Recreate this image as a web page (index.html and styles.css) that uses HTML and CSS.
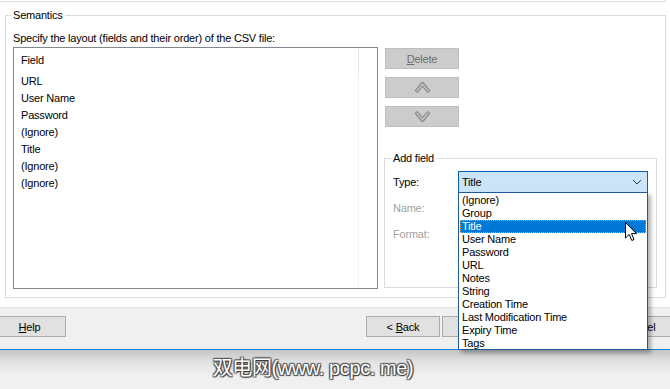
FILE: index.html
```html
<!DOCTYPE html>
<html lang="en">
<head>
    <meta charset="UTF-8">
    <title>CSV Import - Semantics</title>
    <link rel="stylesheet" href="styles.css">
</head>
<body>
    <div class="window">
        <div class="prev-edge"></div>

        <fieldset class="group semantics">
            <legend>Semantics</legend>
            <p class="hint">Specify the layout (fields and their order) of the CSV file:</p>
            <div class="semantics-body">
                <div class="listview">
                    <div class="lv-col">
                        <div class="lv-header">Field</div>
                        <ul class="lv-items">
                            <li>URL</li>
                            <li>User Name</li>
                            <li>Password</li>
                            <li>(Ignore)</li>
                            <li>Title</li>
                            <li>(Ignore)</li>
                            <li>(Ignore)</li>
                        </ul>
                    </div>
                </div>

                <div class="side">
                    <div class="side-buttons">
                        <button class="btn btn-disabled"><span><u>D</u>elete</span></button>
                        <button class="btn btn-disabled" aria-label="Move up">
                            <svg width="17" height="11" viewBox="0 0 17 11">
                                <path d="M2 10 L8.5 2 L15 10" fill="none" stroke="#8e8e8e" stroke-width="4" stroke-linejoin="miter"/>
                                <path d="M2.6 9.4 L8.5 2.2 L14.4 9.4" fill="none" stroke="#c4c4c4" stroke-width="1.4"/>
                            </svg>
                        </button>
                        <button class="btn btn-disabled" aria-label="Move down">
                            <svg width="17" height="11" viewBox="0 0 17 11">
                                <path d="M2 1 L8.5 9 L15 1" fill="none" stroke="#8e8e8e" stroke-width="4" stroke-linejoin="miter"/>
                                <path d="M2.6 1.6 L8.5 8.8 L14.4 1.6" fill="none" stroke="#c4c4c4" stroke-width="1.4"/>
                            </svg>
                        </button>
                    </div>

                    <fieldset class="group add-field">
                        <legend>Add field</legend>
                        <div class="form-row">
                            <span class="form-label">Type:</span>
                            <div class="combo">
                                <span>Title</span>
                                <svg width="10" height="6" viewBox="0 0 10 6">
                                    <path d="M1 1 L5 5 L9 1" fill="none" stroke="#333" stroke-width="1"/>
                                </svg>
                            </div>
                        </div>
                        <div class="form-row disabled">
                            <span class="form-label">Name:</span>
                        </div>
                        <div class="form-row disabled">
                            <span class="form-label">Format:</span>
                        </div>
                    </fieldset>
                </div>
            </div>
        </fieldset>

        <div class="spacer"></div>

        <div class="button-bar">
            <button class="btn btn-help"><span><u>H</u>elp</span></button>
            <div class="nav-buttons">
                <button class="btn"><span>&lt; <u>B</u>ack</span></button>
                <button class="btn"><span><u>N</u>ext &gt;</span></button>
                <button class="btn btn-cancel"><span>Cancel</span></button>
            </div>
        </div>

        <div class="desktop">
            <span class="watermark">双电网(www. pcpc. me)</span>
        </div>

        <ul class="dropdown">
            <li>(Ignore)</li>
            <li>Group</li>
            <li class="selected">Title</li>
            <li>User Name</li>
            <li>Password</li>
            <li>URL</li>
            <li>Notes</li>
            <li>String</li>
            <li>Creation Time</li>
            <li>Last Modification Time</li>
            <li>Expiry Time</li>
            <li>Tags</li>
        </ul>

        <svg class="cursor" width="13" height="20" viewBox="0 0 13 20">
            <path d="M0.5 0.5 L0.5 16 L4.2 12.4 L6.8 18.5 L9 17.5 L6.5 11.6 L11.5 11.6 Z" fill="#fff" stroke="#000" stroke-width="1" stroke-linejoin="round"/>
        </svg>
    </div>
</body>
</html>
```

FILE: styles.css
```css
* {
    margin: 0;
    padding: 0;
    box-sizing: border-box;
}

body {
    background-color: #fff;
    font-family: 'Liberation Sans', Arial, sans-serif;
    font-size: 11px;
    letter-spacing: -0.2px;
    color: #000;
}

.window {
    position: relative;
    width: 670px;
    height: 389px;
    overflow: hidden;
    display: flex;
    flex-direction: column;
    background-color: #fff;
}

.prev-edge {
    width: 666px;
    height: 2px;
    border-bottom: 1px solid #dcdcdc;
    border-right: 1px solid #dcdcdc;
}

/* group boxes */
.group {
    border: 1px solid #dcdcdc;
}

.group legend {
    line-height: 13px;
    padding: 0 2px;
    margin-left: -2px;
}

.semantics {
    margin: 7px 5px 0 5px;
    padding: 10px 8px 8px 7px;
}

.hint {
    line-height: 13px;
    margin-bottom: 2px;
}

.semantics-body {
    display: flex;
    gap: 6px;
}

.listview {
    width: 365px;
    height: 242px;
    border: 1px solid #828790;
    background: #fff;
}

.lv-col {
    width: 345px;
    height: 100%;
    border-right: 1px solid transparent;
    border-image: linear-gradient(#e5e5e5 0, #e5e5e5 25px, #eef3fa 26px, #eef3fa 100%) 1;
    padding-left: 7px;
}

.lv-header {
    line-height: 13px;
    padding-top: 6px;
    height: 25px;
}

.lv-items {
    list-style: none;
}

.lv-items li {
    line-height: 17px;
    height: 17px;
}

.side {
    flex: 1;
    display: flex;
    flex-direction: column;
}

.side-buttons {
    display: flex;
    flex-direction: column;
    gap: 8px;
    margin: 1px 0 0 1px;
}

.btn {
    flex: none;
    width: 74px;
    height: 21px;
    border: 1px solid #adadad;
    background: #e1e1e1;
    font-family: inherit;
    font-size: 11px;
    letter-spacing: -0.2px;
    color: #000;
    display: flex;
    align-items: center;
    justify-content: center;
}

.btn-disabled {
    background: #cccccc;
    border-color: #bfbfbf;
    color: #6d6d6d;
}

.add-field {
    margin-top: 25px;
    width: 273px;
    height: 136px;
    padding: 6px 8px 0 8px;
}

.form-row {
    display: flex;
    align-items: center;
    height: 22px;
    margin-bottom: 4px;
}

.form-label {
    width: 65px;
}

.form-row.disabled {
    color: #a0a0a0;
}

.combo {
    width: 190px;
    height: 22px;
    border: 1px solid #0a5fb4;
    background: #cce4f7;
    display: flex;
    align-items: center;
    justify-content: space-between;
    padding: 0 5px 0 3px;
}

.spacer {
    height: 10px;
    border-bottom: 1px solid #dfdfdf;
}

.button-bar {
    height: 42px;
    background: #f0f0f0;
    display: flex;
    justify-content: space-between;
    padding-top: 8px;
    border-bottom: 1px solid #1883d7;
}

.btn-help {
    width: 67px;
    margin-left: -1px;
    padding-right: 6px;
}

.nav-buttons {
    display: flex;
    gap: 2px;
    margin-right: -6px;
}

.btn-cancel {
    margin-left: 84px;
}

.desktop {
    flex: 1;
    background: linear-gradient(#c4c4c4 0, #e2e2e2 12px, #f0f0f0 26px, #f0f0f0 100%);
    display: flex;
    justify-content: center;
    align-items: center;
    padding-right: 44px;
    padding-bottom: 7px;
}

.watermark {
    font-family: 'Liberation Sans', 'Noto Sans CJK SC', sans-serif;
    font-size: 20px;
    letter-spacing: -0.4px;
    color: #fff;
    text-shadow: 1px 1px 1px #333, -1px -1px 1px #555, 1px -1px 1px #555, -1px 1px 1px #555;
}

/* open combo list */
.dropdown {
    position: absolute;
    left: 458px;
    top: 192px;
    width: 190px;
    height: 158px;
    list-style: none;
    background: #fff;
    border: 1px solid #1c5a99;
    padding: 1px 1px 0;
    box-shadow: 3px 3px 4px rgba(0, 0, 0, 0.3);
}

.dropdown li {
    height: 13px;
    line-height: 13px;
    padding-left: 2px;
}

.dropdown li.selected {
    background: #0078d7;
    color: #fff;
    outline: 1px dotted #f0a030;
    outline-offset: -1px;
}

.cursor {
    position: absolute;
    left: 625px;
    top: 222px;
}
```
